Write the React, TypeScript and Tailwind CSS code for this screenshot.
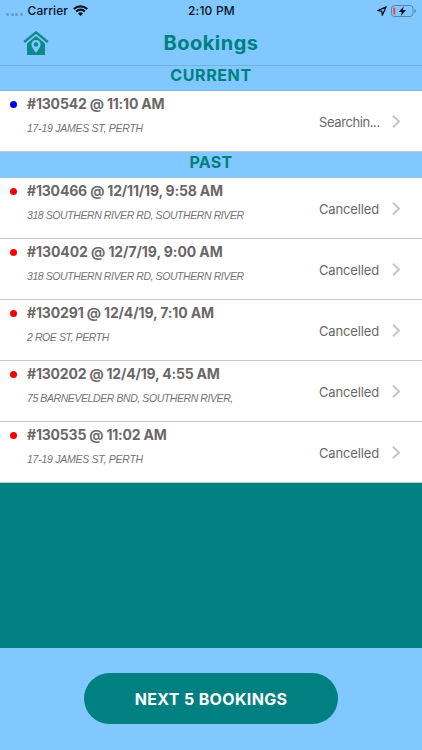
type Booking = { title: string; address: string; status: string; dot: string; fit: string; addressFit: string; statusFit: string };

const current: Booking[] = [
  { title: "#130542 @ 11:10 AM", address: "17-19 JAMES ST, PERTH", status: "Searchin...", dot: "bg-[#0000e6]", fit: "tracking-[-0.18px]", addressFit: "tracking-[-0.26px]", statusFit: "tracking-[-0.4px]" },
];

const past: Booking[] = [
  { title: "#130466 @ 12/11/19, 9:58 AM", address: "318 SOUTHERN RIVER RD, SOUTHERN RIVER", status: "Cancelled", dot: "bg-[#f50000]", fit: "tracking-[-0.18px]", addressFit: "tracking-[-0.42px]", statusFit: "tracking-[-0.15px]" },
  { title: "#130402 @ 12/7/19, 9:00 AM", address: "318 SOUTHERN RIVER RD, SOUTHERN RIVER", status: "Cancelled", dot: "bg-[#f50000]", fit: "tracking-[-0.08px]", addressFit: "tracking-[-0.42px]", statusFit: "tracking-[-0.15px]" },
  { title: "#130291 @ 12/4/19, 7:10 AM", address: "2 ROE ST, PERTH", status: "Cancelled", dot: "bg-[#f50000]", fit: "tracking-[-0.14px]", addressFit: "tracking-[-0.41px]", statusFit: "tracking-[-0.15px]" },
  { title: "#130202 @ 12/4/19, 4:55 AM", address: "75 BARNEVELDER BND, SOUTHERN RIVER,", status: "Cancelled", dot: "bg-[#f50000]", fit: "tracking-[-0.2px]", addressFit: "tracking-[-0.42px]", statusFit: "tracking-[-0.15px]" },
  { title: "#130535 @ 11:02 AM", address: "17-19 JAMES ST, PERTH", status: "Cancelled", dot: "bg-[#f50000]", fit: "tracking-[-0.2px]", addressFit: "tracking-[-0.26px]", statusFit: "tracking-[-0.15px]" },
];

function Row({ b }: { b: Booking }) {
  return (
    <li className="flex h-[61px] border-b border-[#c8c7cc] bg-white pl-[10px]">
      <span className={`mt-[10px] size-[7px] shrink-0 rounded-full ${b.dot}`} />
      <div className="flex-1 pl-[10px] pt-[3px] whitespace-nowrap">
        <div className={`text-[14px] leading-5 font-bold text-[#6b6767] ${b.fit}`}>{b.title}</div>
        <div className={`mt-[7px] font-['Liberation_Sans',Arial,sans-serif] text-[10.5px] leading-[14px] text-[#767373] italic ${b.addressFit}`}>{b.address}</div>
      </div>
      <span className={`mt-[21px] w-[61px] text-[13px] leading-5 whitespace-nowrap text-[#6b6767] ${b.statusFit}`}>{b.status}</span>
      <svg className="mt-[24px] mr-[21px] ml-[11px] h-[13px] w-[10px]" viewBox="0 0 10 13" fill="none" stroke="#c5c4c8" strokeWidth="2">
        <path d="M2 .8 8 6.5 2 12.2" />
      </svg>
    </li>
  );
}

export default function App() {
  return (
    <div className="flex h-[750px] w-[422px] flex-col overflow-hidden bg-[#008080] font-['Inter',sans-serif]">
      <header className="h-[66px] border-b border-[#70b0e2] bg-[#80c8ff]">
        <div className="flex h-[21px] items-center pl-[6px] pr-[5px] text-[12px] text-[#06131c]">
          <div className="flex flex-1 items-center">
            <span className="mt-[7px] flex gap-[1.5px]">
              <i className="size-[3px] rounded-full bg-[#639bc6]" />
              <i className="size-[3px] rounded-full bg-[#639bc6]" />
              <i className="size-[3px] rounded-full bg-[#639bc6]" />
              <i className="size-[3px] rounded-full bg-[#639bc6]" />
            </span>
            <span className="ml-[5px] font-medium tracking-[0.1px]">Carrier</span>
            <svg className="ml-[5px] h-[11px] w-[15px]" viewBox="0 0 15 11" fill="none" stroke="#06131c" strokeWidth="2.1">
              <path d="M.8 4.1a9.5 9.5 0 0 1 13.4 0M3.1 6.5a6.2 6.2 0 0 1 8.8 0" />
              <path d="M7.5 11 5 8.4a3.7 3.7 0 0 1 5 0Z" fill="#06131c" stroke="none" />
            </svg>
          </div>
          <span className="font-medium tracking-[0.2px]">2:10 PM</span>
          <div className="flex flex-1 items-center justify-end">
            <svg className="h-[10px] w-[10px]" viewBox="0 0 10 10" fill="none" stroke="#06131c" strokeWidth="1.3" strokeLinejoin="round">
              <path d="M9.2.8.8 4.7l4 .5.5 4Z" />
            </svg>
            <svg className="ml-[4px] h-[12px] w-[26px]" viewBox="0 0 26 12">
              <rect x=".5" y=".5" width="21.5" height="11" rx="3" fill="none" stroke="#5685a8" />
              <path d="M23.5 4v4q1.5-.5 1.5-2t-1.5-2" fill="#5685a8" />
              <rect x="2.3" y="2.5" width="2" height="7" rx=".7" fill="#fa3e43" />
              <path d="M12.8 1.3 7.8 6.9h3L9.8 10.9 15 5.1h-3.2Z" fill="#06131c" />
            </svg>
          </div>
        </div>
        <div className="flex h-[43px] items-center px-[23px]">
          <svg className="h-[24px] w-[26px]" viewBox="0 0 26 24">
            <path d="M4 12.4 13 4.9l9 7.5V24H4Z" fill="#0d8989" />
            <path d="M1.2 11 13 1.4 24.8 11" fill="none" stroke="#80c8ff" strokeWidth="4.2" />
            <path d="M1.2 11 13 1.4 24.8 11" fill="none" stroke="#0d8989" strokeWidth="2.3" />
            <path fillRule="evenodd" d="M13 21.9c-1.9-3-4.6-5.5-4.6-8.3a4.6 4.6 0 0 1 9.2 0c0 2.8-2.7 5.3-4.6 8.3Zm0-10.7a2.2 2.2 0 1 0 0 4.4 2.2 2.2 0 0 0 0-4.4Z" fill="#80c8ff" />
          </svg>
          <h1 className="flex-1 pr-[26px] text-center text-[20px] leading-6 font-bold tracking-[0.5px] text-[#008080]">Bookings</h1>
        </div>
      </header>
      <h2 className="h-[25px] border-b border-[#84b4db] bg-[#80c8ff] text-center text-[16px] leading-[19px] font-bold tracking-[0.6px] text-[#008080]">CURRENT</h2>
      <ul>{current.map((b) => <Row key={b.title} b={b} />)}</ul>
      <h2 className="h-[26px] border-b border-[#90bfdf] bg-[#80c8ff] text-center text-[16px] leading-[20px] font-bold tracking-[0.3px] text-[#008080]">PAST</h2>
      <ul>{past.map((b) => <Row key={b.title} b={b} />)}</ul>
      <footer className="mt-auto flex h-[102px] justify-center bg-[#80c8ff] pt-[25px]">
        <button className="h-[51px] w-[254px] rounded-full bg-[#008080] text-[16px] font-bold tracking-[0.35px] text-white">NEXT 5 BOOKINGS</button>
      </footer>
    </div>
  );
}
